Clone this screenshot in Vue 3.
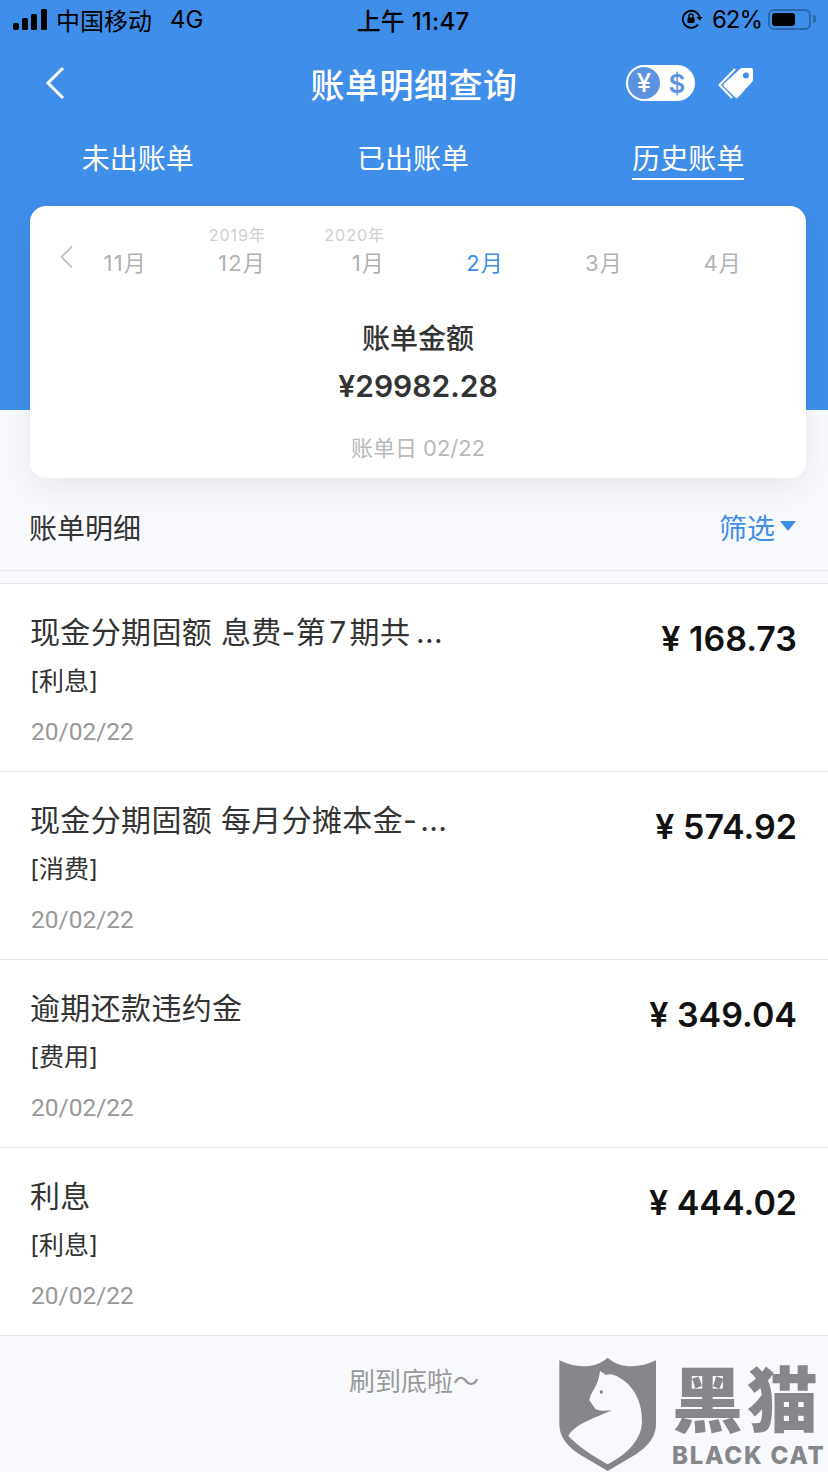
<script setup>
const months = [
  { label: '11月' },
  { label: '12月', year: '2019年' },
  { label: '1月', year: '2020年' },
  { label: '2月', active: true },
  { label: '3月' },
  { label: '4月' }
];

const bills = [
  { title: '现金分期固额 息费-第\u200a7\u200a期共\u2009...', tag: '[利息]', date: '20/02/22', amount: '168.73' },
  { title: '现金分期固额 每月分摊本金-\u200a...', tag: '[消费]', date: '20/02/22', amount: '574.92' },
  { title: '逾期还款违约金', tag: '[费用]', date: '20/02/22', amount: '349.04' },
  { title: '利息', tag: '[利息]', date: '20/02/22', amount: '444.02' }
];
</script>

<template>
  <div class="page">
    <header class="header">
      <div class="status">
        <div class="status-left">
          <svg class="signal" width="34" height="22" viewBox="0 0 34 22" fill="#000">
            <rect x="0" y="15" width="6" height="7" rx="2" />
            <rect x="9" y="10" width="6" height="12" rx="1.5" />
            <rect x="18" y="6" width="6" height="16" rx="1.5" />
            <rect x="28" y="1" width="6" height="21" rx="1.5" />
          </svg>
          <span>中国移动</span>
          <span class="net">4G</span>
        </div>
        <div class="time">上午 11:47</div>
        <div class="status-right">
          <svg width="22" height="20" viewBox="0 0 22 20">
            <path d="M18.6 8.5A8.5 8.5 0 1 0 17 15.5" fill="none" stroke="#000" stroke-width="1.8" />
            <path d="M15.4 8h6.4l-3.2 3.6z" fill="#000" />
            <rect x="6.5" y="8.5" width="7" height="5.5" rx="1" fill="#000" />
            <path d="M8 9V7a2 2 0 0 1 4 0v2" fill="none" stroke="#000" stroke-width="1.4" />
          </svg>
          <span class="percent">62%</span>
          <div class="battery"><div class="battery-fill"></div></div>
          <div class="battery-nub"></div>
        </div>
      </div>

      <div class="nav">
        <div class="nav-left">
          <svg width="20" height="34" viewBox="0 0 20 34">
            <path d="M18 2 3 17l15 15" fill="none" stroke="#fff" stroke-width="3" />
          </svg>
        </div>
        <div class="nav-title">账单明细查询</div>
        <div class="nav-right">
          <div class="toggle">
            <span class="toggle-on">¥</span>
            <span class="toggle-off">$</span>
          </div>
          <svg class="tag-icon" width="40" height="34" viewBox="0 0 40 34">
            <path d="M19 3 3.5 19 16 32" fill="none" stroke="#fff" stroke-width="2" stroke-linejoin="round" />
            <path d="M26 2h9a2 2 0 0 1 2 2v10a2 2 0 0 1-.6 1.4L22 31.500a2 2 0 0 1-2.800 0L8 20.400a2 2 0 0 1 0-2.800L24.600 2.600A2 2 0 0 1 26 2z" fill="#fff" />
            <circle cx="30" cy="9.500" r="3" fill="#3f8ee9" />
          </svg>
        </div>
      </div>

      <div class="tabs">
        <div class="tab">未出账单</div>
        <div class="tab">已出账单</div>
        <div class="tab"><span class="tab-current">历史账单</span></div>
      </div>
    </header>

    <section class="card">
      <div class="months">
        <svg class="month-back" width="13" height="24" viewBox="0 0 13 24">
          <path d="M12 1.500 1.500 12 12 22.500" fill="none" stroke="#c4c4c4" stroke-width="2" />
        </svg>
        <div class="month-grid">
          <div v-for="m in months" :key="m.label" class="month" :class="{ active: m.active }">
            <span class="month-year">{{ m.year }}</span>
            <span class="month-label">{{ m.label }}</span>
          </div>
        </div>
      </div>
      <div class="sum-title">账单金额</div>
      <div class="sum-value">¥29982.28</div>
      <div class="sum-date">账单日 02/22</div>
    </section>

    <div class="section-head">
      <span>账单明细</span>
      <span class="filter">筛选<i class="filter-arrow"></i></span>
    </div>

    <ul class="list">
      <li v-for="b in bills" :key="b.amount" class="row">
        <div class="row-info">
          <div class="row-title">{{ b.title }}</div>
          <div class="row-tag">{{ b.tag }}</div>
          <div class="row-date">{{ b.date }}</div>
        </div>
        <div class="row-amount">¥ {{ b.amount }}</div>
      </li>
    </ul>

    <div class="end-note">刷到底啦～</div>

    <!-- 水印 -->
    <div class="watermark">
      <svg width="98" height="114" viewBox="88 50 292 342">
        <path d="M88 60c50 25 110 25 145-8 35 33 95 33 145 8v190c0 45-30 70-60 92l-85 50-85-50c-30-22-60-47-60-92z" fill="#86878a" />
        <path d="M210 92l18 12c8-3 15-3 24 0 50 20 85 70 84 140-1 50-40 95-103 128-30-18-80-45-118-85 20-35 70-50 130-77-15 2-30 3-48-3l-19-27c5-30 25-35 32-88z" fill="#f8f9fd" />
        <circle cx="214" cy="155" r="5" fill="#86878a" />
      </svg>
      <div class="wm-text">
        <div class="wm-cn">黑猫</div>
        <div class="wm-en">BLACK CAT</div>
      </div>
    </div>
  </div>
</template>

<style>
body {
  margin: 0;
  background: #f8f9fd;
}
</style>

<style scoped>
.page {
  position: relative;
  width: 828px;
  height: 1472px;
  overflow: hidden;
  background: #f8f9fd;
  font-family: Inter, "Noto Sans CJK SC", sans-serif;
  color: #333;
}

.header {
  height: 410px;
  background: #3f8ee9;
  color: #fff;
}

.status {
  height: 38px;
  padding-bottom: 4px;
  display: grid;
  grid-template-columns: 1fr auto 1fr;
  align-items: center;
  color: #000;
  font-size: 24px;
}
.status-left {
  display: flex;
  align-items: center;
  padding-left: 13px;
}
.signal {
  margin-right: 9px;
}
.net {
  margin-left: 18px;
}
.time {
  font-size: 24px;
  font-weight: 500;
  letter-spacing: 0.2px;
  padding-right: 2px;
}
.status-right {
  display: flex;
  align-items: center;
  justify-content: flex-end;
  padding-right: 12px;
}
.percent {
  margin: 0 6px 0 9px;
  font-size: 24px;
  letter-spacing: -1px;
}
.battery {
  width: 43px;
  height: 21px;
  box-sizing: border-box;
  padding: 2px;
  border: 2px solid #2a69a8;
  border-radius: 6px;
}
.battery-fill {
  width: 23px;
  height: 100%;
  background: #000;
  border-radius: 3px;
}
.battery-nub {
  width: 3px;
  height: 8px;
  margin-left: 2px;
  background: #2a69a8;
  border-radius: 0 3px 3px 0;
}

.nav {
  height: 82px;
  display: grid;
  grid-template-columns: 1fr auto 1fr;
  align-items: center;
}
.nav-left {
  display: flex;
  padding-left: 45px;
}
.nav-title {
  font-size: 34px;
  font-weight: 500;
  letter-spacing: 0.5px;
}
.nav-right {
  display: flex;
  align-items: center;
  justify-content: flex-end;
  padding-right: 72px;
}
.toggle {
  width: 69px;
  height: 36px;
  display: flex;
  align-items: center;
  box-sizing: border-box;
  padding-left: 2px;
  background: #fff;
  border-radius: 18px;
  margin-right: 21px;
}
.toggle-on {
  width: 32px;
  height: 32px;
  line-height: 32px;
  text-align: center;
  border-radius: 50%;
  background: #5c93e0;
  color: #fff;
  font-size: 26px;
  font-weight: 500;
}
.toggle-off {
  width: 32px;
  margin-left: 1px;
  text-align: center;
  color: #5c93e0;
  font-size: 26px;
  font-weight: 600;
}

.tabs {
  display: grid;
  grid-template-columns: repeat(3, 1fr);
  margin-top: 15px;
  padding-right: 2px;
  text-align: center;
  font-size: 28px;
  line-height: 40px;
}
.tab-current {
  display: inline-block;
  height: 39px;
  border-bottom: 2px solid #fff;
}

.card {
  position: relative;
  height: 272px;
  margin: -204px 22px 0 30px;
  background: #fff;
  border-radius: 16px;
  box-shadow: 0 10px 30px rgba(40, 50, 70, 0.08);
  text-align: center;
}
.months {
  display: flex;
  align-items: flex-start;
  height: 92px;
  padding-left: 30px;
  text-align: left;
}
.month-back {
  margin: 39px 28px 0 0;
  flex: none;
}
.month-grid {
  display: grid;
  grid-template-columns: 46px repeat(5, 119px);
}
.month {
  display: flex;
  flex-direction: column;
  align-items: flex-end;
  padding-top: 19px;
  color: #b2b2b2;
}
.month-year {
  height: 20px;
  line-height: 20px;
  font-size: 16px;
  letter-spacing: 1px;
  color: #cfcfcf;
}
.month-label {
  margin-top: 2px;
  line-height: 32px;
  font-size: 22px;
  letter-spacing: 1.2px;
  white-space: nowrap;
}
.month.active {
  color: #3f8ee9;
}
.sum-title {
  margin-top: 19px;
  line-height: 44px;
  font-size: 28px;
  font-weight: 500;
}
.sum-value {
  line-height: 50px;
  font-size: 30px;
  font-weight: 600;
}
.sum-date {
  margin-top: 19px;
  line-height: 36px;
  font-size: 22px;
  color: #b9b9b9;
}

.section-head {
  display: flex;
  justify-content: space-between;
  align-items: center;
  height: 44px;
  padding: 27px 32px 21px 29px;
  border-bottom: 1px solid #e6e7ea;
  font-size: 28px;
}
.filter {
  display: flex;
  align-items: center;
  color: #3f8ee9;
}
.filter-arrow {
  width: 0;
  height: 0;
  margin: 0 0 2px 5px;
  border-left: 8px solid transparent;
  border-right: 8px solid transparent;
  border-top: 10px solid #3f8ee9;
}

.list {
  margin: 12px 0 0;
  padding: 0;
  list-style: none;
  background: #fff;
  border-top: 1px solid #e6e7ea;
}
.row {
  display: flex;
  justify-content: space-between;
  box-sizing: border-box;
  height: 188px;
  padding: 24px 31px 0 30px;
  border-bottom: 1px solid #e6e7ea;
}
.row-info {
  line-height: 49px;
}
.row-title {
  font-size: 30px;
  letter-spacing: 0.35px;
}
.row-tag {
  font-size: 25px;
}
.row-date {
  margin-left: 1px;
  line-height: 51px;
  font-family: Roboto, sans-serif;
  font-size: 24.5px;
  color: #999;
}
.row-amount {
  line-height: 62px;
  font-size: 34px;
  font-weight: 600;
  color: #111;
  white-space: nowrap;
}

.end-note {
  margin-top: 27px;
  line-height: 38px;
  text-align: center;
  font-size: 26px;
  color: #999;
}

.watermark {
  position: absolute;
  left: 559px;
  top: 1357px;
  display: flex;
  color: #86878a;
}
.wm-text {
  margin-left: 15px;
}
.wm-cn {
  height: 78px;
  margin-top: 4px;
  line-height: 78px;
  font-size: 71px;
  font-weight: 900;
  letter-spacing: 4px;
  white-space: nowrap;
}
.wm-en {
  margin-top: 6px;
  line-height: 22px;
  font-size: 24px;
  font-weight: 800;
  letter-spacing: 1.8px;
  white-space: nowrap;
}
</style>
